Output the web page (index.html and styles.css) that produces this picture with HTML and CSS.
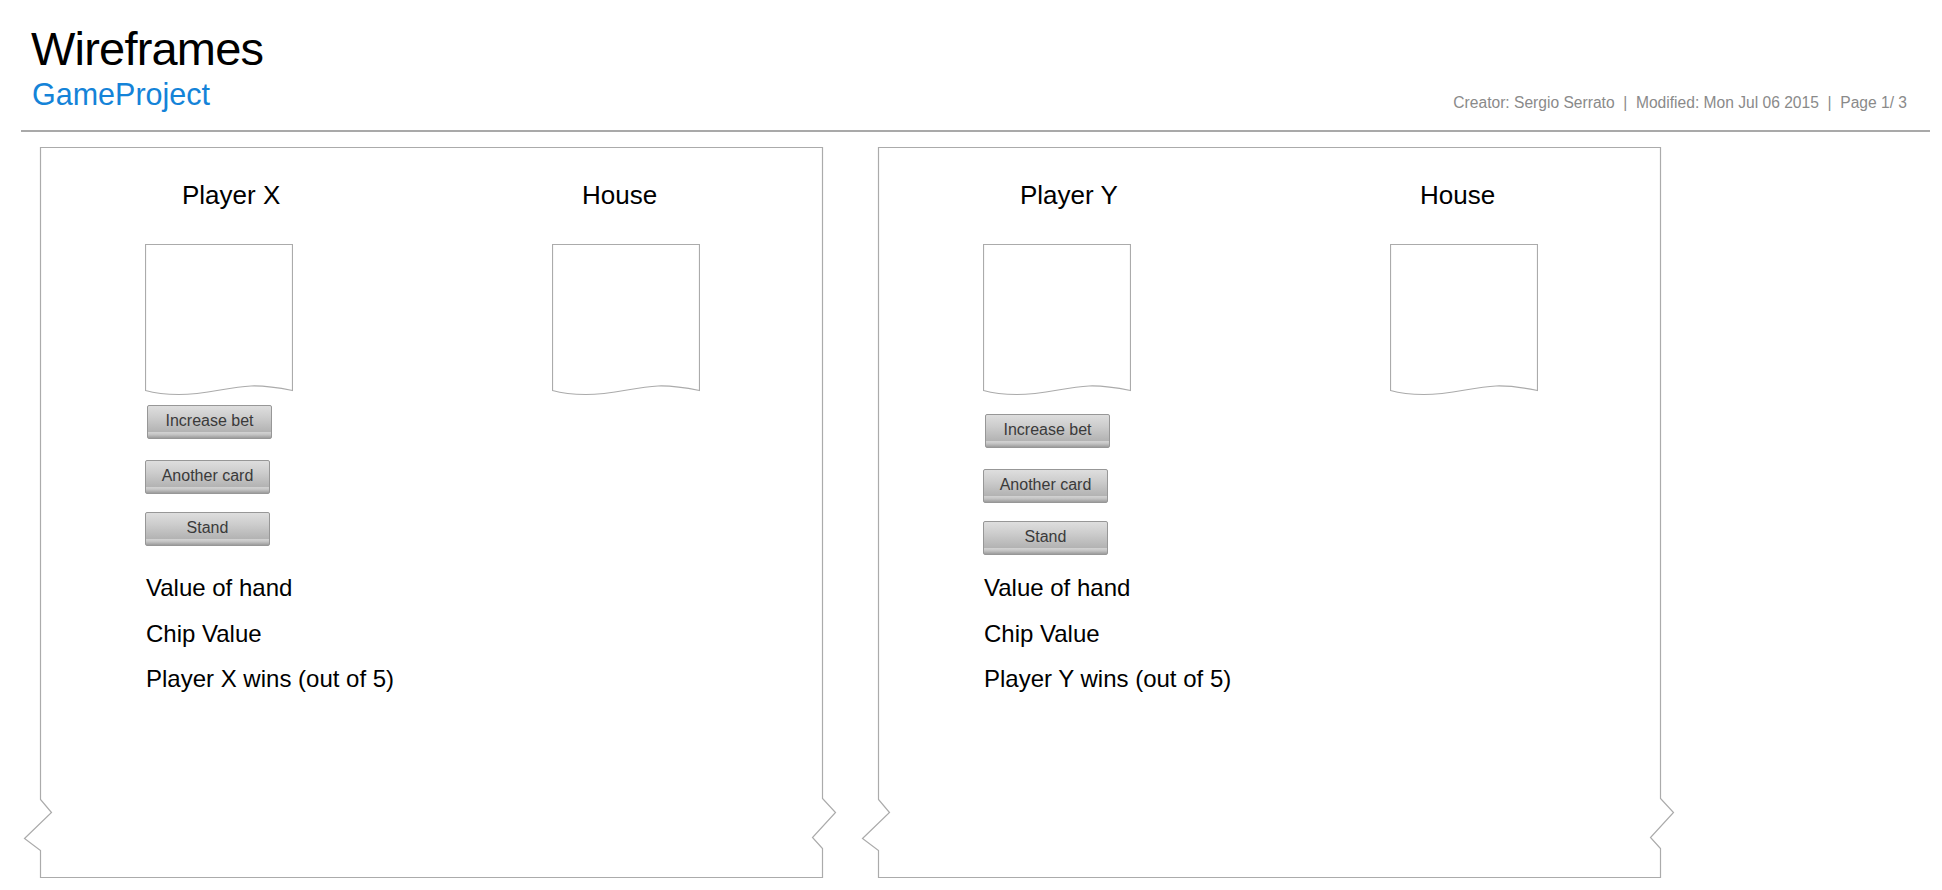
FILE: index.html
```html
<!DOCTYPE html>
<html lang="en">
<head>
<meta charset="utf-8">
<title>Wireframes - GameProject</title>
<link rel="stylesheet" href="styles.css">
</head>
<body>
<header class="doc-header">
  <div class="doc-titles">
    <h1 class="doc-title">Wireframes</h1>
    <div class="doc-project">GameProject</div>
  </div>
  <div class="doc-meta">Creator: Sergio Serrato &nbsp;|&nbsp; Modified: Mon Jul 06 2015 &nbsp;|&nbsp; Page 1/ 3</div>
</header>

<main class="boards">
  <section class="board">
    <svg class="board-outline" width="824" height="732" viewBox="0 0 824 732" aria-hidden="true">
      <path d="M20.5,0.5 H802.5 V651.5 L815.5,665.5 L792.5,690.5 L802.5,701.5 V730.5 H20.5 V703.5 L4.5,691.5 L31.5,665.5 L20.5,652.5 Z" fill="none" stroke="#ababab" stroke-width="1.2"/>
    </svg>
    <div class="board-cols">
      <div class="col col-player">
        <h2 class="col-title">Player X</h2>
        <svg class="card" width="148" height="153" viewBox="0 0 148 153" aria-hidden="true">
          <path d="M0.5,0.5 H147.5 V146.5 C135,144 121,141.5 106,142 C82,143 62,150.5 34,150.5 C20,150.5 9,149 0.5,146.5 Z" fill="#fff" stroke="#ababab" stroke-width="1.2"/>
        </svg>
        <div class="controls">
          <button class="btn">Increase bet</button>
          <button class="btn">Another card</button>
          <button class="btn">Stand</button>
        </div>
        <div class="stats">
          <div class="stat">Value of hand</div>
          <div class="stat">Chip Value</div>
          <div class="stat">Player X wins (out of 5)</div>
        </div>
      </div>
      <div class="col col-house">
        <h2 class="col-title">House</h2>
        <svg class="card" width="148" height="153" viewBox="0 0 148 153" aria-hidden="true">
          <path d="M0.5,0.5 H147.5 V146.5 C135,144 121,141.5 106,142 C82,143 62,150.5 34,150.5 C20,150.5 9,149 0.5,146.5 Z" fill="#fff" stroke="#ababab" stroke-width="1.2"/>
        </svg>
      </div>
    </div>
  </section>

  <section class="board">
    <svg class="board-outline" width="824" height="732" viewBox="0 0 824 732" aria-hidden="true">
      <path d="M20.5,0.5 H802.5 V651.5 L815.5,665.5 L792.5,690.5 L802.5,701.5 V730.5 H20.5 V703.5 L4.5,691.5 L31.5,665.5 L20.5,652.5 Z" fill="none" stroke="#ababab" stroke-width="1.2"/>
    </svg>
    <div class="board-cols">
      <div class="col col-player">
        <h2 class="col-title">Player Y</h2>
        <svg class="card" width="148" height="153" viewBox="0 0 148 153" aria-hidden="true">
          <path d="M0.5,0.5 H147.5 V146.5 C135,144 121,141.5 106,142 C82,143 62,150.5 34,150.5 C20,150.5 9,149 0.5,146.5 Z" fill="#fff" stroke="#ababab" stroke-width="1.2"/>
        </svg>
        <div class="controls controls-low">
          <button class="btn">Increase bet</button>
          <button class="btn">Another card</button>
          <button class="btn">Stand</button>
        </div>
        <div class="stats">
          <div class="stat">Value of hand</div>
          <div class="stat">Chip Value</div>
          <div class="stat">Player Y wins (out of 5)</div>
        </div>
      </div>
      <div class="col col-house">
        <h2 class="col-title">House</h2>
        <svg class="card" width="148" height="153" viewBox="0 0 148 153" aria-hidden="true">
          <path d="M0.5,0.5 H147.5 V146.5 C135,144 121,141.5 106,142 C82,143 62,150.5 34,150.5 C20,150.5 9,149 0.5,146.5 Z" fill="#fff" stroke="#ababab" stroke-width="1.2"/>
        </svg>
      </div>
    </div>
  </section>
</main>
</body>
</html>
```

FILE: styles.css
```css
* {
  box-sizing: border-box;
}

html, body {
  margin: 0;
  padding: 0;
  background: #fff;
}

body {
  font-family: "Liberation Sans", Arial, Helvetica, sans-serif;
  color: #000;
  width: 1942px;
  height: 890px;
  overflow: hidden;
}

/* ---------- header ---------- */
.doc-header {
  display: flex;
  justify-content: space-between;
  align-items: flex-end;
  margin: 0 12px 0 21px;
  padding: 22px 23px 18px 10px;
  border-bottom: 2px solid #a9a9a9;
}

.doc-title {
  margin: 0;
  font-size: 47px;
  line-height: 54px;
  font-weight: 400;
  letter-spacing: -0.8px;
  color: #000;
}

.doc-project {
  font-size: 30.5px;
  line-height: 36px;
  color: #1483d8;
  padding-left: 1px;
}

.doc-meta {
  font-size: 15.6px;
  line-height: 18px;
  color: #8a8a8a;
}

/* ---------- boards ---------- */
.boards {
  display: flex;
  gap: 56px;
  padding-left: 40px;
  margin-top: 15px;
}

.board {
  position: relative;
  width: 782px;
  height: 731px;
  padding: 33px 0 0 105px;
}

.board-outline {
  position: absolute;
  left: -20px;
  top: 0;
  pointer-events: none;
}

.board-cols {
  position: relative;
  display: grid;
  grid-template-columns: 407px 1fr;
}

.col {
  display: flex;
  flex-direction: column;
  align-items: flex-start;
}

.col-title {
  margin: 0;
  font-size: 26px;
  line-height: 30px;
  font-weight: 400;
  color: #000;
}

.col-player .col-title {
  padding-left: 37px;
}

.col-house .col-title {
  padding-left: 30px;
}

.card {
  display: block;
  margin-top: 34px;
}

/* ---------- controls ---------- */
.controls {
  display: flex;
  flex-direction: column;
  align-items: flex-start;
  height: 168px;
  padding-top: 8px;
}

.controls-low {
  padding-top: 17px;
}

.btn {
  width: 125px;
  height: 34px;
  padding: 0 0 2px;
  margin: 0;
  font-family: "Liberation Sans", Arial, Helvetica, sans-serif;
  font-size: 16px;
  line-height: 30px;
  color: #3a3a3a;
  text-align: center;
  border: 1px solid #979797;
  border-radius: 2px;
  background: linear-gradient(to bottom,
    #dedede 0%,
    #cdcdcd 35%,
    #b3b3b3 80%,
    #d2d2d2 83%,
    #c2c2c2 90%,
    #9c9c9c 100%);
  cursor: pointer;
}

.btn:first-child {
  margin-left: 2px;
  margin-bottom: 21px;
}

.btn:nth-child(2) {
  margin-bottom: 18px;
}

/* ---------- stats ---------- */
.stats {
  padding-left: 1px;
}

.stat {
  font-size: 24px;
  line-height: 45px;
  color: #000;
  white-space: nowrap;
}

.stat:first-child {
  margin-bottom: 1px;
}
```
